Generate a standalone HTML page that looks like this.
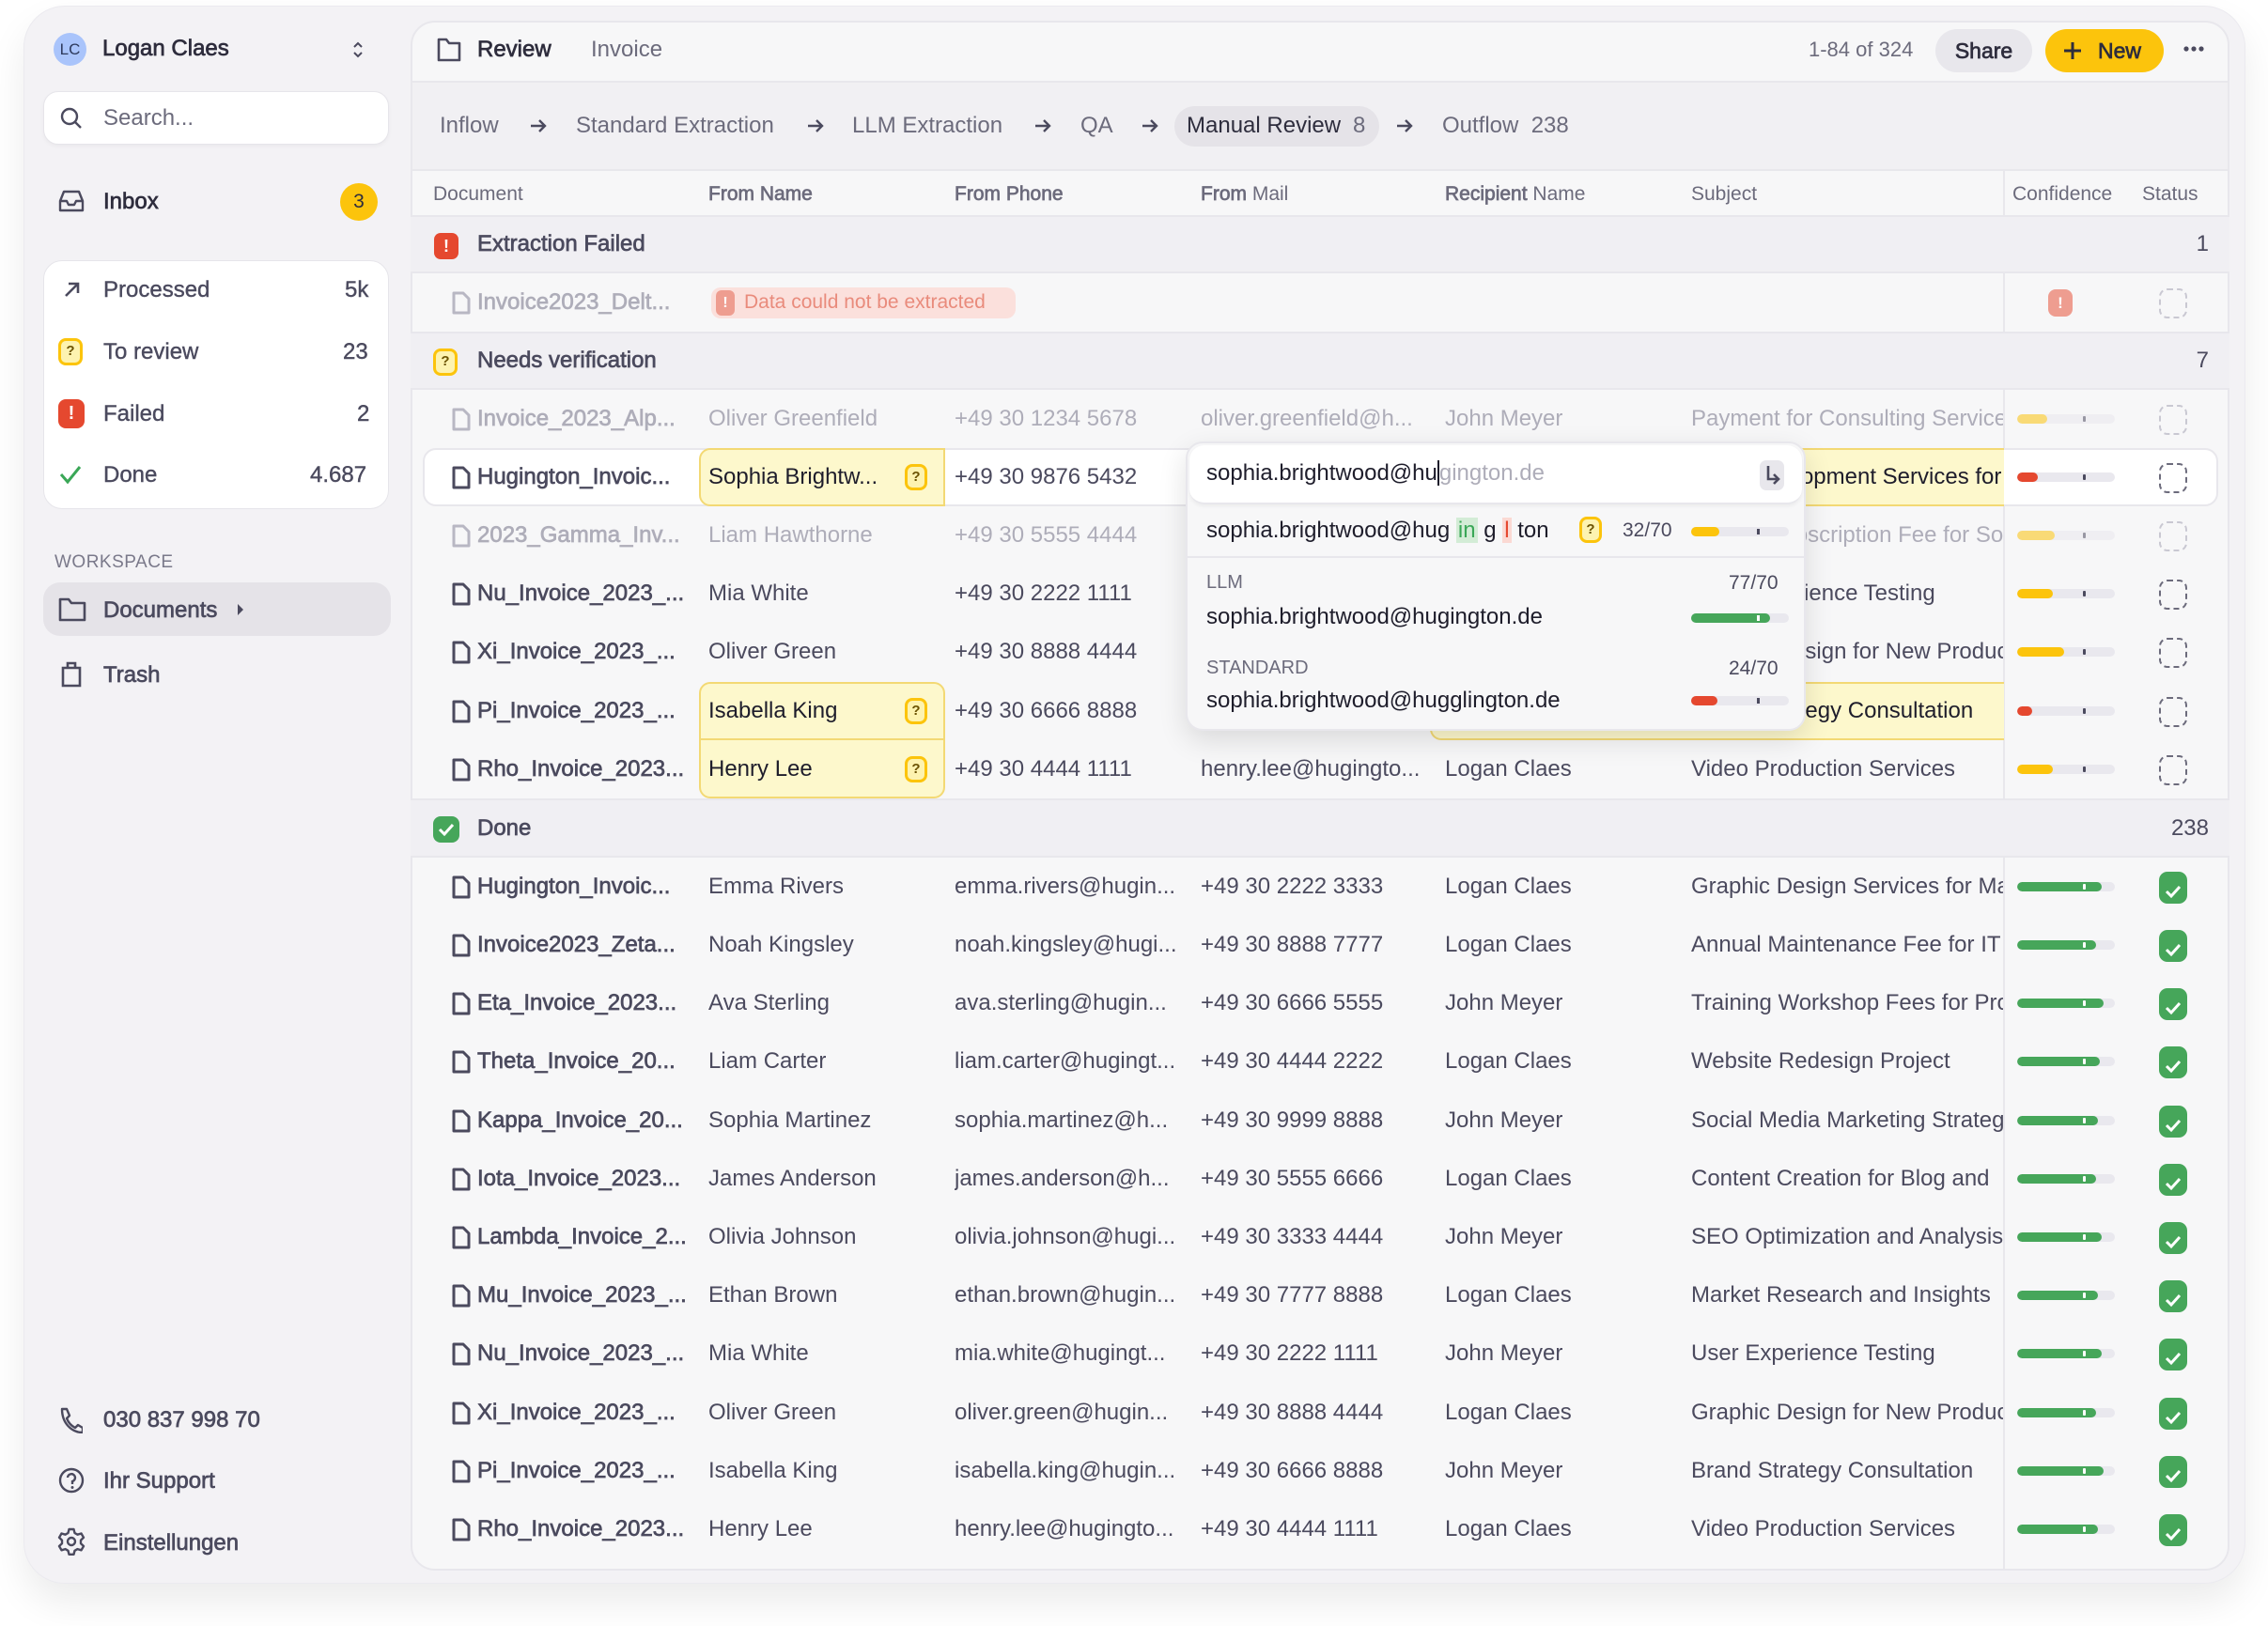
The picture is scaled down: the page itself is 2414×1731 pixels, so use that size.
<!DOCTYPE html>
<html><head><meta charset="utf-8">
<style>
*{box-sizing:border-box;margin:0;padding:0}
body{width:2414px;height:1731px;background:#fff;font-family:"Liberation Sans",sans-serif;color:#4b4a5e;position:relative;overflow:hidden}
.a{position:absolute}
.card{left:25px;top:6px;width:2365px;height:1680px;background:#f3f2f5;border-radius:44px;box-shadow:0 20px 40px rgba(0,0,0,.08);border:1px solid #ebeaef}
.panel{left:437px;top:22px;width:1936px;height:1650px;background:#f7f7f8;border:2px solid #e8e7ec;border-radius:26px;overflow:hidden}
.side{font-size:24px;color:#4b4a5e;-webkit-text-stroke:0.4px currentColor}
.md{font-weight:normal !important;-webkit-text-stroke:0.7px currentColor}
.row{position:absolute;left:437px;width:1936px;height:62px;font-size:24px;line-height:62px;white-space:nowrap}
.c{position:absolute;top:0;height:62px;overflow:hidden;white-space:nowrap}
.doc{left:71px;width:232px;-webkit-text-stroke:0.7px currentColor}
.nm{left:317px;width:250px}
.ph{left:579px;width:250px}
.ml{left:841px;width:250px}
.rc{left:1101px;width:250px}
.sb{left:1363px;width:332px}
.dim{color:#aeadb9}
.ic{position:absolute;left:44px;top:19px}
.grp{background:#f0eff3;border-top:2px solid #e8e7ec;border-bottom:2px solid #e8e7ec}
.gl{position:absolute;left:71px;color:#4b4a5e;-webkit-text-stroke:0.7px currentColor}
.gn{position:absolute;right:22px;color:#4b4a5e}
.bar{position:absolute;left:1710px;top:26px;width:104px;height:10px;border-radius:5px;background:#e9e8ee;overflow:hidden}
.bar i{position:absolute;left:0;top:0;height:10px;border-radius:5px}
.bar b{position:absolute;left:70px;top:2px;width:3px;height:6px;background:#4b4a5e;border-radius:1px}
.dash{position:absolute;left:1861px;top:16px;width:30px;height:32px;border:2.5px dashed #6c6b7c;border-radius:9px}
.chk{position:absolute;left:1861px;top:15px;width:30px;height:34px;background:#46a65a;border-radius:9px}
.yel{position:absolute;left:307px;width:262px;height:62px;background:#fdf8cc;border:2px solid #f3d974}
.q{position:absolute;top:17px;width:24px;height:28px;border:3px solid #fcc40c;border-radius:8px;background:#fdf3b0;font-size:15px;line-height:22px;text-align:center;font-weight:bold;color:#6b5200}
.vd{position:absolute;left:2132px;width:2px;background:#e8e7ec}
</style></head><body>
<div class="a card"></div>

<!-- Sidebar -->
<div class="a" style="left:57px;top:35px;width:35px;height:35px;border-radius:50%;background:#a9c4fb;font-size:17px;line-height:35px;text-align:center;color:#2d3a5c">LC</div>
<div class="a side md" style="left:109px;top:38px;color:#2e2d3d">Logan Claes</div>
<svg class="a" style="left:374px;top:42px" width="14" height="22" viewBox="0 0 14 22"><path d="M3 8l4-4 4 4M3 14l4 4 4-4" fill="none" stroke="#4b4a5e" stroke-width="2"/></svg>
<div class="a" style="left:46px;top:97px;width:368px;height:57px;background:#fff;border-radius:16px;border:1px solid #e6e5ea;box-shadow:0 2px 4px rgba(0,0,0,.04)"></div>
<svg class="a" style="left:63px;top:113px" width="26" height="26" viewBox="0 0 26 26"><circle cx="11" cy="11" r="8" fill="none" stroke="#4b4a5e" stroke-width="2.4"/><path d="M17 17l6 6" stroke="#4b4a5e" stroke-width="2.4"/></svg>
<div class="a" style="left:110px;top:112px;font-size:24px;color:#6c6b7c">Search...</div>

<svg class="a" style="left:62px;top:201px" width="28" height="26" viewBox="0 0 28 26"><path d="M2 13l4-10h16l4 10v10H2z M2 13h7l2 4h6l2-4h7" fill="none" stroke="#4b4a5e" stroke-width="2.4" stroke-linejoin="round"/></svg>
<div class="a side md" style="left:110px;top:201px;color:#2e2d3d">Inbox</div>
<div class="a" style="left:362px;top:195px;width:40px;height:40px;border-radius:50%;background:#fcc40c;font-size:21px;line-height:40px;text-align:center;color:#2e2d3d">3</div>

<div class="a" style="left:46px;top:277px;width:368px;height:265px;background:#fff;border-radius:20px;border:1px solid #e6e5ea"></div>
<svg class="a" style="left:66px;top:298px" width="20" height="20" viewBox="0 0 20 20"><path d="M4 17L16 5M7 4h10v10" fill="none" stroke="#4b4a5e" stroke-width="2.6"/></svg>
<div class="a side" style="left:110px;top:295px">Processed</div><div class="a side" style="left:367px;top:295px">5k</div>
<div class="a" style="left:62px;top:360px;width:26px;height:29px;border:3px solid #fcc40c;border-radius:8px;background:#fdf3b0;font-size:15px;line-height:22px;text-align:center;font-weight:bold;color:#6b5200">?</div>
<div class="a side" style="left:110px;top:361px">To review</div><div class="a side" style="left:365px;top:361px">23</div>
<div class="a" style="left:62px;top:425px;width:28px;height:31px;border-radius:8px;background:#e5482f;color:#fff;font-weight:bold;font-size:20px;line-height:31px;text-align:center">!</div>
<div class="a side" style="left:110px;top:427px">Failed</div><div class="a side" style="left:380px;top:427px">2</div>
<svg class="a" style="left:63px;top:494px" width="24" height="22" viewBox="0 0 24 22"><path d="M2 11l7 8L22 3" fill="none" stroke="#3aa757" stroke-width="3"/></svg>
<div class="a side" style="left:110px;top:492px">Done</div><div class="a side" style="left:330px;top:492px">4.687</div>

<div class="a" style="left:58px;top:588px;font-size:19px;color:#7a798a;letter-spacing:.5px">WORKSPACE</div>
<div class="a" style="left:46px;top:620px;width:370px;height:57px;background:#e5e3e8;border-radius:18px"></div>
<svg class="a" style="left:62px;top:636px" width="30" height="26" viewBox="0 0 30 26"><path d="M2 2h9l3 4h14v18H2z" fill="none" stroke="#4b4a5e" stroke-width="2.6" stroke-linejoin="round"/></svg>
<div class="a side md" style="left:110px;top:636px">Documents</div>
<svg class="a" style="left:251px;top:642px" width="10" height="14" viewBox="0 0 10 14"><path d="M2 1l6 6-6 6z" fill="#4b4a5e"/></svg>
<svg class="a" style="left:64px;top:704px" width="24" height="28" viewBox="0 0 24 28"><path d="M3 7h18v19H3z M8 7V2h8v5" fill="none" stroke="#4b4a5e" stroke-width="2.6"/></svg>
<div class="a side md" style="left:110px;top:705px">Trash</div>

<svg class="a" style="left:62px;top:1498px" width="26" height="28" viewBox="0 0 26 28"><path d="M4 2l5 0 3 7-3 3c2 5 5 8 9 10l3-3 5 3v5c-12 0-22-10-22-25z" fill="none" stroke="#4b4a5e" stroke-width="2.4" stroke-linejoin="round"/></svg>
<div class="a side md" style="left:110px;top:1498px">030 837 998 70</div>
<svg class="a" style="left:62px;top:1562px" width="28" height="28" viewBox="0 0 28 28"><circle cx="14" cy="14" r="12" fill="none" stroke="#4b4a5e" stroke-width="2.4"/><path d="M10 11a4 4 0 1 1 5 4v3" fill="none" stroke="#4b4a5e" stroke-width="2.4"/><circle cx="15" cy="21.5" r="1.5" fill="#4b4a5e"/></svg>
<div class="a side md" style="left:110px;top:1563px">Ihr Support</div>
<svg class="a" style="left:61px;top:1626px" width="30" height="30" viewBox="0 0 30 30"><path d="M12.5 2h5l1 4 3 1.7 4-1.2 2.5 4.3-3 2.9v3.4l3 2.9-2.5 4.3-4-1.2-3 1.7-1 4h-5l-1-4-3-1.7-4 1.2-2.5-4.3 3-2.9v-3.4l-3-2.9 2.5-4.3 4 1.2 3-1.7z" fill="none" stroke="#4b4a5e" stroke-width="2.4" stroke-linejoin="round"/><circle cx="15" cy="15" r="4" fill="none" stroke="#4b4a5e" stroke-width="2.4"/></svg>
<div class="a side md" style="left:110px;top:1629px">Einstellungen</div>

<!-- Main panel -->
<div class="a panel"></div>
<div class="a" style="left:439px;top:86px;width:1932px;height:2px;background:#e8e7ec"></div>
<div class="a" style="left:439px;top:88px;width:1932px;height:94px;background:#f1f0f3"></div>
<div class="a" style="left:439px;top:180px;width:1932px;height:2px;background:#e8e7ec"></div>
<svg class="a" style="left:465px;top:40px" width="26" height="26" viewBox="0 0 26 26"><path d="M2 2h8l3 4h11v18H2z" fill="none" stroke="#4b4a5e" stroke-width="2.6" stroke-linejoin="round"/></svg>
<div class="a md" style="left:508px;top:39px;font-size:24px;color:#2e2d3d">Review</div>
<div class="a" style="left:629px;top:39px;font-size:24px;color:#6c6b7c">Invoice</div>
<div class="a" style="left:1925px;top:40px;font-size:22px;color:#6c6b7c">1-84 of 324</div>
<div class="a md" style="left:2060px;top:31px;width:103px;height:46px;border-radius:23px;background:#e8e7ec;font-size:23px;line-height:46px;text-align:center;color:#2e2d3d">Share</div>
<div class="a md" style="left:2177px;top:31px;width:126px;height:46px;border-radius:23px;background:#fcc40c;font-size:23px;line-height:46px;color:#2e2d3d;padding-left:56px">New</div>
<svg class="a" style="left:2195px;top:43px" width="22" height="22" viewBox="0 0 22 22"><path d="M11 2v18M2 11h18" stroke="#2e2d3d" stroke-width="3"/></svg>
<svg class="a" style="left:2323px;top:48px" width="24" height="8" viewBox="0 0 24 8"><circle cx="4" cy="4" r="2.6" fill="#4b4a5e"/><circle cx="12" cy="4" r="2.6" fill="#4b4a5e"/><circle cx="20" cy="4" r="2.6" fill="#4b4a5e"/></svg>

<!-- pipeline -->
<div class="a" style="left:1250px;top:113px;width:218px;height:43px;border-radius:22px;background:#e5e3e8"></div>
<div class="a" style="top:120px;left:468px;font-size:24px;color:#6c6b7c;white-space:nowrap">Inflow</div>
<div class="a" style="top:120px;left:613px;font-size:24px;color:#6c6b7c;white-space:nowrap">Standard Extraction</div>
<div class="a" style="top:120px;left:907px;font-size:24px;color:#6c6b7c;white-space:nowrap">LLM Extraction</div>
<div class="a" style="top:120px;left:1150px;font-size:24px;color:#6c6b7c">QA</div>
<div class="a" style="top:120px;left:1263px;font-size:24px;color:#2e2d3d;white-space:nowrap">Manual Review</div>
<div class="a" style="top:120px;left:1440px;font-size:24px;color:#6c6b7c">8</div>
<div class="a" style="top:120px;left:1535px;font-size:24px;color:#6c6b7c;white-space:nowrap">Outflow&nbsp;&nbsp;238</div>
<svg class="a" style="left:563px;top:124px" width="20" height="20" viewBox="0 0 20 20"><path d="M2 10h15M11 4l6 6-6 6" fill="none" stroke="#4b4a5e" stroke-width="2.4"/></svg>
<svg class="a" style="left:858px;top:124px" width="20" height="20" viewBox="0 0 20 20"><path d="M2 10h15M11 4l6 6-6 6" fill="none" stroke="#4b4a5e" stroke-width="2.4"/></svg>
<svg class="a" style="left:1100px;top:124px" width="20" height="20" viewBox="0 0 20 20"><path d="M2 10h15M11 4l6 6-6 6" fill="none" stroke="#4b4a5e" stroke-width="2.4"/></svg>
<svg class="a" style="left:1214px;top:124px" width="20" height="20" viewBox="0 0 20 20"><path d="M2 10h15M11 4l6 6-6 6" fill="none" stroke="#4b4a5e" stroke-width="2.4"/></svg>
<svg class="a" style="left:1485px;top:124px" width="20" height="20" viewBox="0 0 20 20"><path d="M2 10h15M11 4l6 6-6 6" fill="none" stroke="#4b4a5e" stroke-width="2.4"/></svg>

<!-- column header -->
<div class="row" style="top:182px;height:49px;line-height:49px;font-size:21px;color:#6c6b7c">
<span class="c" style="left:24px;height:49px">Document</span>
<span class="c" style="left:317px;height:49px"><b class="md">From Name</b></span>
<span class="c" style="left:579px;height:49px"><b class="md">From Phone</b></span>
<span class="c" style="left:841px;height:49px"><b class="md">From</b> Mail</span>
<span class="c" style="left:1101px;height:49px"><b class="md">Recipient</b> Name</span>
<span class="c" style="left:1363px;height:49px">Subject</span>
<span class="c" style="left:1705px;height:49px">Confidence</span>
<span class="c" style="left:1843px;height:49px">Status</span>
</div>
<div class="vd a" style="left:2132px;top:182px;height:49px"></div>
<div class="vd a" style="top:290px;height:64px"></div>
<div class="vd a" style="top:414px;height:436px"></div>
<div class="vd a" style="top:912px;height:758px"></div>

<!-- Extraction Failed -->
<div class="row grp" style="top:229px;height:62px">
<div class="a" style="left:25px;top:17px;width:26px;height:28px;border-radius:7px;background:#e5482f;color:#fff;font-weight:bold;font-size:18px;line-height:28px;text-align:center">!</div>
<span class="gl" style="line-height:58px">Extraction Failed</span><span class="gn" style="line-height:58px">1</span></div>
<div class="row" style="top:291px">
<svg class="ic" width="20" height="25" viewBox="0 0 20 25"><path d="M2 2h10l6 6v15H2z" fill="none" stroke="#b8b7c3" stroke-width="3" stroke-linejoin="round"/></svg>
<span class="c doc dim">Invoice2023_Delt...</span>
<div class="a" style="left:320px;top:15px;width:324px;height:33px;border-radius:10px;background:#fbe0dc"></div>
<div class="a" style="left:325px;top:18px;width:20px;height:27px;border-radius:6px;background:#ee9d90;color:#fff;font-weight:bold;font-size:16px;line-height:27px;text-align:center">!</div>
<span class="c" style="left:355px;color:#e98b7c;font-size:21px">Data could not be extracted</span>
<div class="a" style="left:1743px;top:17px;width:26px;height:29px;border-radius:8px;background:#ee9d90;color:#fff;font-weight:bold;font-size:17px;line-height:29px;text-align:center">!</div>
<div class="dash" style="border-color:#c9c8d2"></div>
</div>

<!-- Needs verification -->
<div class="row grp" style="top:353px;height:62px">
<div class="a" style="left:24px;top:16px;width:26px;height:29px;border:3px solid #fcc40c;border-radius:8px;background:#fdf3b0;font-size:15px;line-height:22px;text-align:center;font-weight:bold;color:#6b5200">?</div>
<span class="gl" style="line-height:58px">Needs verification</span><span class="gn" style="line-height:58px">7</span></div>

<div class="row dim" style="top:415px">
<svg class="ic" width="20" height="25" viewBox="0 0 20 25"><path d="M2 2h10l6 6v15H2z" fill="none" stroke="#b8b7c3" stroke-width="3" stroke-linejoin="round"/></svg>
<span class="c doc">Invoice_2023_Alp...</span><span class="c nm">Oliver Greenfield</span><span class="c ph">+49 30 1234 5678</span><span class="c ml">oliver.greenfield@h...</span><span class="c rc">John Meyer</span><span class="c sb">Payment for Consulting Services</span>
<div class="bar" style="opacity:.55"><i style="width:32px;background:#fcc40c"></i><b></b></div><div class="dash" style="border-color:#c9c8d2"></div></div>

<div class="row" style="top:477px;background:#fff;border:2px solid #e8e7ec;border-radius:14px;left:450px;width:1911px"></div>
<div class="row" style="top:477px">
<div class="yel" style="border-radius:12px 0 0 12px"></div><div class="a" style="left:1363px;top:0;width:333px;height:62px;background:#fdf8cc;border:2px solid #f3d974;border-left:0;border-right:0"></div>
<svg class="ic" width="20" height="25" viewBox="0 0 20 25"><path d="M2 2h10l6 6v15H2z" fill="none" stroke="#4b4a5e" stroke-width="3" stroke-linejoin="round"/></svg>
<span class="c doc">Hugington_Invoic...</span><span class="c nm" style="color:#1e1d2b">Sophia Brightw...</span><div class="q" style="left:526px">?</div><span class="c ph">+49 30 9876 5432</span><span class="c sb" style="color:#1e1d2b">Web Development Services for</span>
<div class="bar"><i style="width:22px;background:#e5482f"></i><b></b></div><div class="dash"></div></div>

<div class="row dim" style="top:539px">
<svg class="ic" width="20" height="25" viewBox="0 0 20 25"><path d="M2 2h10l6 6v15H2z" fill="none" stroke="#b8b7c3" stroke-width="3" stroke-linejoin="round"/></svg>
<span class="c doc">2023_Gamma_Inv...</span><span class="c nm">Liam Hawthorne</span><span class="c ph">+49 30 5555 4444</span><span class="c sb">Annual Subscription Fee for Software</span>
<div class="bar" style="opacity:.55"><i style="width:40px;background:#fcc40c"></i><b></b></div><div class="dash" style="border-color:#c9c8d2"></div></div>

<div class="row" style="top:601px">
<svg class="ic" width="20" height="25" viewBox="0 0 20 25"><path d="M2 2h10l6 6v15H2z" fill="none" stroke="#4b4a5e" stroke-width="3" stroke-linejoin="round"/></svg>
<span class="c doc">Nu_Invoice_2023_...</span><span class="c nm">Mia White</span><span class="c ph">+49 30 2222 1111</span><span class="c sb">User Experience Testing</span>
<div class="bar"><i style="width:38px;background:#fcc40c"></i><b></b></div><div class="dash"></div></div>

<div class="row" style="top:663px">
<svg class="ic" width="20" height="25" viewBox="0 0 20 25"><path d="M2 2h10l6 6v15H2z" fill="none" stroke="#4b4a5e" stroke-width="3" stroke-linejoin="round"/></svg>
<span class="c doc">Xi_Invoice_2023_...</span><span class="c nm">Oliver Green</span><span class="c ph">+49 30 8888 4444</span><span class="c sb">Graphic Design for New Products</span>
<div class="bar"><i style="width:50px;background:#fcc40c"></i><b></b></div><div class="dash"></div></div>

<div class="row" style="top:726px">
<div class="yel" style="border-radius:12px 12px 0 0"></div>
<div class="a" style="left:1085px;top:0;width:611px;height:62px;background:#fdf8cc;border:2px solid #f3d974;border-right:0;border-radius:12px 0 0 12px"></div>
<svg class="ic" width="20" height="25" viewBox="0 0 20 25"><path d="M2 2h10l6 6v15H2z" fill="none" stroke="#4b4a5e" stroke-width="3" stroke-linejoin="round"/></svg>
<span class="c doc">Pi_Invoice_2023_...</span><span class="c nm" style="color:#1e1d2b">Isabella King</span><div class="q" style="left:526px">?</div><span class="c ph">+49 30 6666 8888</span><span class="c sb" style="color:#1e1d2b">Brand Strategy Consultation</span>
<div class="bar"><i style="width:16px;background:#e5482f"></i><b></b></div><div class="dash"></div></div>

<div class="row" style="top:788px">
<div class="yel" style="border-radius:0 0 12px 12px;border-top:0"></div>
<svg class="ic" width="20" height="25" viewBox="0 0 20 25"><path d="M2 2h10l6 6v15H2z" fill="none" stroke="#4b4a5e" stroke-width="3" stroke-linejoin="round"/></svg>
<span class="c doc">Rho_Invoice_2023...</span><span class="c nm" style="color:#1e1d2b">Henry Lee</span><div class="q" style="left:526px">?</div><span class="c ph">+49 30 4444 1111</span><span class="c ml">henry.lee@hugingto...</span><span class="c rc">Logan Claes</span><span class="c sb">Video Production Services</span>
<div class="bar"><i style="width:38px;background:#fcc40c"></i><b></b></div><div class="dash"></div></div>

<!-- Done -->
<div class="row grp" style="top:850px;height:63px">
<div class="a" style="left:24px;top:17px;width:28px;height:28px;border-radius:8px;background:#46a65a"></div>
<svg class="a" style="left:29px;top:23px" width="18" height="16" viewBox="0 0 18 16"><path d="M2 8l5 5 9-10" fill="none" stroke="#fff" stroke-width="3"/></svg>
<span class="gl" style="line-height:59px">Done</span><span class="gn" style="line-height:59px">238</span></div>

<!-- Popup -->
<div class="a" style="left:1262px;top:470px;width:660px;height:308px;background:#f7f7f8;border:2px solid #e8e7ec;border-radius:18px;box-shadow:0 10px 30px rgba(0,0,0,.12)"></div>
<div class="a" style="left:1266px;top:474px;width:652px;height:63px;background:#fff;border-bottom:2px solid #e8e7ec;border-radius:16px;box-shadow:0 2px 4px rgba(0,0,0,.05)"></div>
<div class="a" style="left:1284px;top:490px;font-size:24px;color:#1e1d2b;white-space:nowrap">sophia.brightwood@hu<span style="border-left:2px solid #1e1d2b;color:#aeadb9">gington.de</span></div>
<div class="a" style="left:1873px;top:490px;width:26px;height:32px;background:#e8e7ec;border-radius:7px"></div>
<svg class="a" style="left:1877px;top:494px" width="18" height="24" viewBox="0 0 18 24"><path d="M5 2v14h10M11 11l5 5-5 5" fill="none" stroke="#4b4a5e" stroke-width="2.6"/></svg>
<div class="a" style="left:1284px;top:551px;font-size:24px;color:#1e1d2b;white-space:nowrap">sophia.brightwood@hug <span style="background:#d3ecd6;color:#3aa757;padding:0 2px">in</span> g <span style="background:#fbd9d3;color:#e5482f;padding:0 2px">l</span> ton</div>
<div class="a q" style="left:1681px;top:550px">?</div>
<div class="a" style="left:1727px;top:553px;font-size:21px;color:#4b4a5e">32/70</div>
<div class="a" style="left:1800px;top:561px;width:104px;height:10px;border-radius:5px;background:#e9e8ee"><div class="a" style="left:0;top:0;width:30px;height:10px;border-radius:5px;background:#fcc40c"></div><div class="a" style="left:70px;top:2px;width:3px;height:6px;background:#4b4a5e"></div></div>
<div class="a" style="left:1264px;top:592px;width:656px;height:2px;background:#e8e7ec"></div>
<div class="a" style="left:1284px;top:609px;font-size:20px;color:#6c6b7c">LLM</div>
<div class="a" style="left:1840px;top:609px;font-size:21px;color:#4b4a5e">77/70</div>
<div class="a" style="left:1284px;top:643px;font-size:24px;color:#1e1d2b">sophia.brightwood@hugington.de</div>
<div class="a" style="left:1800px;top:653px;width:104px;height:10px;border-radius:5px;background:#e9e8ee"><div class="a" style="left:0;top:0;width:84px;height:10px;border-radius:5px;background:#46a65a"></div><div class="a" style="left:70px;top:2px;width:3px;height:6px;background:#fff"></div></div>
<div class="a" style="left:1284px;top:700px;font-size:20px;color:#6c6b7c">STANDARD</div>
<div class="a" style="left:1840px;top:700px;font-size:21px;color:#4b4a5e">24/70</div>
<div class="a" style="left:1284px;top:732px;font-size:24px;color:#1e1d2b">sophia.brightwood@hugglington.de</div>
<div class="a" style="left:1800px;top:741px;width:104px;height:10px;border-radius:5px;background:#e9e8ee"><div class="a" style="left:0;top:0;width:28px;height:10px;border-radius:5px;background:#e5482f"></div><div class="a" style="left:70px;top:2px;width:3px;height:6px;background:#4b4a5e"></div></div>

<!-- done rows -->
<div class="row" style="top:913px"><svg class="ic" width="20" height="25" viewBox="0 0 20 25"><path d="M2 2h10l6 6v15H2z" fill="none" stroke="#4b4a5e" stroke-width="3" stroke-linejoin="round"/></svg><span class="c doc">Hugington_Invoic...</span><span class="c nm">Emma Rivers</span><span class="c ph">emma.rivers@hugin...</span><span class="c ml">+49 30 2222 3333</span><span class="c rc">Logan Claes</span><span class="c sb">Graphic Design Services for Marketing</span><div class="bar"><i style="width:90px;background:#46a65a"></i><b style="background:#fff"></b></div><div class="chk"><svg width="30" height="34" viewBox="0 0 30 34"><path d="M8 17l5 5 9-10" fill="none" stroke="#fff" stroke-width="3"/></svg></div></div>
<div class="row" style="top:975px"><svg class="ic" width="20" height="25" viewBox="0 0 20 25"><path d="M2 2h10l6 6v15H2z" fill="none" stroke="#4b4a5e" stroke-width="3" stroke-linejoin="round"/></svg><span class="c doc">Invoice2023_Zeta...</span><span class="c nm">Noah Kingsley</span><span class="c ph">noah.kingsley@hugi...</span><span class="c ml">+49 30 8888 7777</span><span class="c rc">Logan Claes</span><span class="c sb">Annual Maintenance Fee for IT</span><div class="bar"><i style="width:84px;background:#46a65a"></i><b style="background:#fff"></b></div><div class="chk"><svg width="30" height="34" viewBox="0 0 30 34"><path d="M8 17l5 5 9-10" fill="none" stroke="#fff" stroke-width="3"/></svg></div></div>
<div class="row" style="top:1037px"><svg class="ic" width="20" height="25" viewBox="0 0 20 25"><path d="M2 2h10l6 6v15H2z" fill="none" stroke="#4b4a5e" stroke-width="3" stroke-linejoin="round"/></svg><span class="c doc">Eta_Invoice_2023...</span><span class="c nm">Ava Sterling</span><span class="c ph">ava.sterling@hugin...</span><span class="c ml">+49 30 6666 5555</span><span class="c rc">John Meyer</span><span class="c sb">Training Workshop Fees for Project</span><div class="bar"><i style="width:92px;background:#46a65a"></i><b style="background:#fff"></b></div><div class="chk"><svg width="30" height="34" viewBox="0 0 30 34"><path d="M8 17l5 5 9-10" fill="none" stroke="#fff" stroke-width="3"/></svg></div></div>
<div class="row" style="top:1099px"><svg class="ic" width="20" height="25" viewBox="0 0 20 25"><path d="M2 2h10l6 6v15H2z" fill="none" stroke="#4b4a5e" stroke-width="3" stroke-linejoin="round"/></svg><span class="c doc">Theta_Invoice_20...</span><span class="c nm">Liam Carter</span><span class="c ph">liam.carter@hugingt...</span><span class="c ml">+49 30 4444 2222</span><span class="c rc">Logan Claes</span><span class="c sb">Website Redesign Project</span><div class="bar"><i style="width:88px;background:#46a65a"></i><b style="background:#fff"></b></div><div class="chk"><svg width="30" height="34" viewBox="0 0 30 34"><path d="M8 17l5 5 9-10" fill="none" stroke="#fff" stroke-width="3"/></svg></div></div>
<div class="row" style="top:1162px"><svg class="ic" width="20" height="25" viewBox="0 0 20 25"><path d="M2 2h10l6 6v15H2z" fill="none" stroke="#4b4a5e" stroke-width="3" stroke-linejoin="round"/></svg><span class="c doc">Kappa_Invoice_20...</span><span class="c nm">Sophia Martinez</span><span class="c ph">sophia.martinez@h...</span><span class="c ml">+49 30 9999 8888</span><span class="c rc">John Meyer</span><span class="c sb">Social Media Marketing Strategy</span><div class="bar"><i style="width:86px;background:#46a65a"></i><b style="background:#fff"></b></div><div class="chk"><svg width="30" height="34" viewBox="0 0 30 34"><path d="M8 17l5 5 9-10" fill="none" stroke="#fff" stroke-width="3"/></svg></div></div>
<div class="row" style="top:1224px"><svg class="ic" width="20" height="25" viewBox="0 0 20 25"><path d="M2 2h10l6 6v15H2z" fill="none" stroke="#4b4a5e" stroke-width="3" stroke-linejoin="round"/></svg><span class="c doc">Iota_Invoice_2023...</span><span class="c nm">James Anderson</span><span class="c ph">james.anderson@h...</span><span class="c ml">+49 30 5555 6666</span><span class="c rc">Logan Claes</span><span class="c sb">Content Creation for Blog and</span><div class="bar"><i style="width:84px;background:#46a65a"></i><b style="background:#fff"></b></div><div class="chk"><svg width="30" height="34" viewBox="0 0 30 34"><path d="M8 17l5 5 9-10" fill="none" stroke="#fff" stroke-width="3"/></svg></div></div>
<div class="row" style="top:1286px"><svg class="ic" width="20" height="25" viewBox="0 0 20 25"><path d="M2 2h10l6 6v15H2z" fill="none" stroke="#4b4a5e" stroke-width="3" stroke-linejoin="round"/></svg><span class="c doc">Lambda_Invoice_2...</span><span class="c nm">Olivia Johnson</span><span class="c ph">olivia.johnson@hugi...</span><span class="c ml">+49 30 3333 4444</span><span class="c rc">John Meyer</span><span class="c sb">SEO Optimization and Analysis</span><div class="bar"><i style="width:90px;background:#46a65a"></i><b style="background:#fff"></b></div><div class="chk"><svg width="30" height="34" viewBox="0 0 30 34"><path d="M8 17l5 5 9-10" fill="none" stroke="#fff" stroke-width="3"/></svg></div></div>
<div class="row" style="top:1348px"><svg class="ic" width="20" height="25" viewBox="0 0 20 25"><path d="M2 2h10l6 6v15H2z" fill="none" stroke="#4b4a5e" stroke-width="3" stroke-linejoin="round"/></svg><span class="c doc">Mu_Invoice_2023_...</span><span class="c nm">Ethan Brown</span><span class="c ph">ethan.brown@hugin...</span><span class="c ml">+49 30 7777 8888</span><span class="c rc">Logan Claes</span><span class="c sb">Market Research and Insights</span><div class="bar"><i style="width:86px;background:#46a65a"></i><b style="background:#fff"></b></div><div class="chk"><svg width="30" height="34" viewBox="0 0 30 34"><path d="M8 17l5 5 9-10" fill="none" stroke="#fff" stroke-width="3"/></svg></div></div>
<div class="row" style="top:1410px"><svg class="ic" width="20" height="25" viewBox="0 0 20 25"><path d="M2 2h10l6 6v15H2z" fill="none" stroke="#4b4a5e" stroke-width="3" stroke-linejoin="round"/></svg><span class="c doc">Nu_Invoice_2023_...</span><span class="c nm">Mia White</span><span class="c ph">mia.white@hugingt...</span><span class="c ml">+49 30 2222 1111</span><span class="c rc">John Meyer</span><span class="c sb">User Experience Testing</span><div class="bar"><i style="width:90px;background:#46a65a"></i><b style="background:#fff"></b></div><div class="chk"><svg width="30" height="34" viewBox="0 0 30 34"><path d="M8 17l5 5 9-10" fill="none" stroke="#fff" stroke-width="3"/></svg></div></div>
<div class="row" style="top:1473px"><svg class="ic" width="20" height="25" viewBox="0 0 20 25"><path d="M2 2h10l6 6v15H2z" fill="none" stroke="#4b4a5e" stroke-width="3" stroke-linejoin="round"/></svg><span class="c doc">Xi_Invoice_2023_...</span><span class="c nm">Oliver Green</span><span class="c ph">oliver.green@hugin...</span><span class="c ml">+49 30 8888 4444</span><span class="c rc">Logan Claes</span><span class="c sb">Graphic Design for New Products</span><div class="bar"><i style="width:84px;background:#46a65a"></i><b style="background:#fff"></b></div><div class="chk"><svg width="30" height="34" viewBox="0 0 30 34"><path d="M8 17l5 5 9-10" fill="none" stroke="#fff" stroke-width="3"/></svg></div></div>
<div class="row" style="top:1535px"><svg class="ic" width="20" height="25" viewBox="0 0 20 25"><path d="M2 2h10l6 6v15H2z" fill="none" stroke="#4b4a5e" stroke-width="3" stroke-linejoin="round"/></svg><span class="c doc">Pi_Invoice_2023_...</span><span class="c nm">Isabella King</span><span class="c ph">isabella.king@hugin...</span><span class="c ml">+49 30 6666 8888</span><span class="c rc">John Meyer</span><span class="c sb">Brand Strategy Consultation</span><div class="bar"><i style="width:92px;background:#46a65a"></i><b style="background:#fff"></b></div><div class="chk"><svg width="30" height="34" viewBox="0 0 30 34"><path d="M8 17l5 5 9-10" fill="none" stroke="#fff" stroke-width="3"/></svg></div></div>
<div class="row" style="top:1597px"><svg class="ic" width="20" height="25" viewBox="0 0 20 25"><path d="M2 2h10l6 6v15H2z" fill="none" stroke="#4b4a5e" stroke-width="3" stroke-linejoin="round"/></svg><span class="c doc">Rho_Invoice_2023...</span><span class="c nm">Henry Lee</span><span class="c ph">henry.lee@hugingto...</span><span class="c ml">+49 30 4444 1111</span><span class="c rc">Logan Claes</span><span class="c sb">Video Production Services</span><div class="bar"><i style="width:86px;background:#46a65a"></i><b style="background:#fff"></b></div><div class="chk"><svg width="30" height="34" viewBox="0 0 30 34"><path d="M8 17l5 5 9-10" fill="none" stroke="#fff" stroke-width="3"/></svg></div></div>
</body></html>
